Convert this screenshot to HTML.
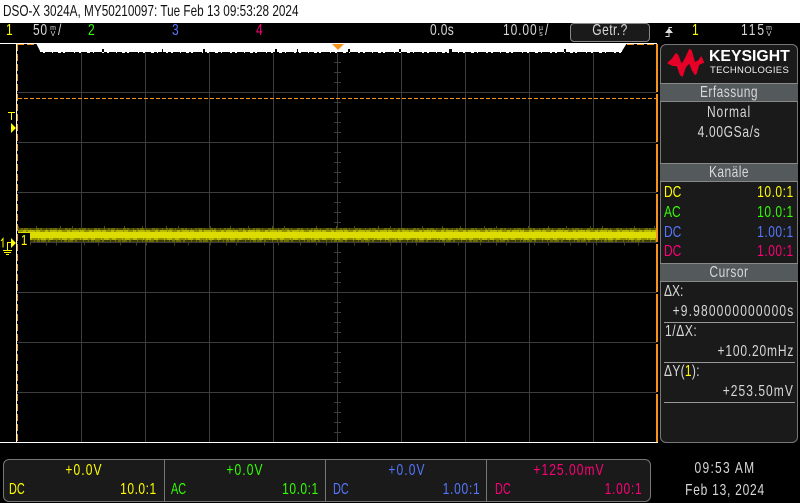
<!DOCTYPE html>
<html><head><meta charset="utf-8"><style>
html,body{margin:0;padding:0;background:#000;width:800px;height:503px;overflow:hidden}
body{position:relative;font-family:"Liberation Sans",sans-serif;font-size:16px;color:#d8d8d8}
.t,.r,.c{position:absolute;white-space:nowrap;line-height:18px;height:18px}
.t{transform-origin:0 50%;transform:scaleX(.75)}
.r{transform-origin:100% 50%;transform:scaleX(.75)}
.c{transform:translateX(-50%) scaleX(.75)}
.y{color:#ff0}.g{color:#3f0}.b{color:#57f}.p{color:#f07}
.box{position:absolute;box-sizing:border-box}
.hd{position:absolute;left:660px;width:138px;height:19px;background:#54595b;border-top:1px solid #888;border-bottom:1px solid #888;box-sizing:border-box}
.ln{position:absolute;left:664px;width:131px;height:1px;background:#999}
.s{position:absolute;font-size:7px;line-height:7px;color:#ddd;transform:translateX(-50%)}
svg{position:absolute;left:0;top:0}
</style></head><body>
<div class="box" style="left:0;top:0;width:800px;height:23px;background:#fff"></div>
<div class="t" style="left:3px;top:3px;color:#111;transform:scaleX(.735)">DSO-X 3024A, MY50210097: Tue Feb 13 09:53:28 2024</div>

<div class="t y" style="left:6px;top:22px">1</div>
<div class="t" style="left:33px;top:22px;letter-spacing:1px">50</div>
<div class="s" style="left:53px;top:25px">m</div><div class="s" style="left:53px;top:31px">V</div>
<div class="t" style="left:58px;top:22px">/</div>
<div class="t g" style="left:88px;top:22px">2</div>
<div class="t b" style="left:172px;top:22px">3</div>
<div class="t p" style="left:256px;top:22px">4</div>
<div class="t" style="left:430px;top:22px;letter-spacing:.5px">0.0s</div>
<div class="t" style="left:503px;top:22px;letter-spacing:1.2px">10.00</div>
<div class="s" style="left:541px;top:25px">µ</div><div class="s" style="left:541px;top:31px">s</div>
<div class="t" style="left:545px;top:22px">/</div>
<div class="box" style="left:570px;top:23px;width:80px;height:19px;background:#1a1a1a;border:1px solid #888;border-radius:4px"></div>
<div class="c" style="left:610px;top:22px;letter-spacing:.6px">Getr.?</div>
<div class="t y" style="left:692px;top:22px">1</div>
<div class="t" style="left:741px;top:22px;letter-spacing:2.600px">115</div>
<div class="s" style="left:769px;top:25px">m</div><div class="s" style="left:769px;top:31px">V</div>

<svg width="800" height="503" viewBox="0 0 800 503">
<!-- trigger slope icon -->
<path d="M665.500 36.500H669V27.500H672" stroke="#ddd" fill="none"/>
<path d="M665 33L669 28L673 33z" fill="#ddd"/>
<!-- grid -->
<g stroke="#3c3c3c" stroke-width="1">
<path d="M81.500 44V442M145.500 44V442M209.500 44V442M273.500 44V442M337.500 44V442M401.500 44V442M465.500 44V442M529.500 44V442M593.500 44V442"/>
<path d="M17 92.500H657M17 142.500H657M17 192.500H657M17 242.500H657M17 292.500H657M17 342.500H657M17 392.500H657"/>
</g>
<path d="M334 62.500H341M334 72.500H341M334 82.500H341M334 102.500H341M334 112.500H341M334 122.500H341M334 132.500H341M334 152.500H341M334 162.500H341M334 172.500H341M334 182.500H341M334 202.500H341M334 212.500H341M334 222.500H341M334 252.500H341M334 262.500H341M334 272.500H341M334 282.500H341M334 302.500H341M334 312.500H341M334 322.500H341M334 332.500H341M334 352.500H341M334 362.500H341M334 372.500H341M334 382.500H341M334 402.500H341M334 412.500H341M334 422.500H341M334 432.500H341" stroke="#3c3c3c"/>
<!-- memory bar -->
<path d="M0 43H657V44H0z" fill="#fff"/>
<path d="M36 43H627L622 51V53H40V51z" fill="#fff"/>
<path d="M40 52.500H622" stroke="#000" stroke-width="1" stroke-dasharray="3 2 7 1 5 3 2 2 9 1 4 2 6 3 3 1 8 2"/>
<path d="M40 50.500H622" stroke="#000" stroke-width="3" stroke-dasharray="0 62 2 3 0 55 1 40 2 70 2 20 1 50 2 45 0 4 2 48 3 50"/>
<path d="M332 44H344L338 50z" fill="#f7941d"/>
<!-- borders -->
<rect x="16" y="43" width="1" height="400" fill="#fff"/>
<rect x="0" y="442" width="658" height="1" fill="#fff"/>
<path d="M17.500 44V442" stroke="#f7941d" stroke-dasharray="7 3"/>
<path d="M657 44V442" stroke="#f7941d" stroke-width="2" stroke-dasharray="48 2"/>
<path d="M17 44.500H36M627 44.500H657" stroke="#f7941d" stroke-dasharray="7 3"/>
<path d="M18 98.500H656" stroke="#f7941d" stroke-dasharray="4 2"/>
<!-- trace -->
<rect x="18" y="228" width="638" height="14" fill="#6e6e00"/>
<rect x="18" y="230" width="638" height="10" fill="#b8b800"/>
<rect x="18" y="232" width="638" height="6" fill="#dcdc00"/>
<path d="M18 229H656" stroke="#4a4a00" stroke-width="2" stroke-dasharray="3 2 1 4 2 1 5 3 1 2 4 1"/>
<path d="M18 231H656" stroke="#8f8f00" stroke-width="2" stroke-dasharray="5 3 2 7 1 4"/>
<path d="M18 239H656" stroke="#8f8f00" stroke-width="2" stroke-dasharray="2 5 3 4 6 1"/>
<path d="M18 227H656" stroke="#4f4f00" stroke-width="2" stroke-dasharray="1 17 1 23 1 11 1 31 1 19"/>
<path d="M30 241H656" stroke="#3f3f00" stroke-width="2" stroke-dasharray="4 1 2 3 1 5 2 2 6 1"/>
<path d="M30 244H656" stroke="#444400" stroke-width="3" stroke-dasharray="1 15 1 9 1 27 1 13 1 21"/>
<rect x="18" y="233" width="12" height="11" fill="#000"/>
<!-- channel ground marker -->
<path d="M1 241L3 238.500V247.500M7.500 250V242.500H12M3 250.500H12M4 252.500H11M6 254.500H9" stroke="#ff0" fill="none"/>
<path d="M11 238L16 243L11 248z" fill="#ff0"/>
<path d="M8 112.500H15M11.500 112V120" stroke="#ff0" fill="none"/>
<path d="M11 123L16 128L11 133z" fill="#ff0"/>
</svg>
<div class="t y" style="left:21px;top:232px;font-size:15px">1</div>

<!-- right panel -->
<div class="box" style="left:660px;top:44px;width:138px;height:399px;background:#1a1a1a;border:1px solid #777;border-radius:6px"></div>
<svg width="800" height="503" viewBox="0 0 800 503">
<path d="M667.300 62.700L671.700 58.700L675.700 53L678.300 54.700L681.700 63.700L685 58L689.300 48.700L691.700 50.300L695 62L698.300 60.300L701.300 56L703.300 60.300L704.300 62.700L699.300 64.700L696.700 73.700L695 75.300L691.700 70.300L689.300 63.700L686 67L682.700 77L680 75.300L676.700 66L672.700 66L668.300 64z" fill="#e60028"/>
</svg>
<div class="box" style="left:709px;top:47px;font-weight:bold;font-size:15.800px;line-height:20px;color:#fff;white-space:nowrap">KEYSIGHT</div>
<div class="box" style="left:710px;top:65px;font-size:9.500px;line-height:12px;letter-spacing:.3px;color:#eee;white-space:nowrap">TECHNOLOGIES</div>

<div class="hd" style="top:83px"></div>
<div class="hd" style="top:163px"></div>
<div class="hd" style="top:263px"></div>
<div class="c" style="left:729px;top:84px;letter-spacing:.6px">Erfassung</div>
<div class="c" style="left:729px;top:104px;letter-spacing:1.2px">Normal</div>
<div class="c" style="left:729px;top:124px;letter-spacing:.9px">4.00GSa/s</div>
<div class="c" style="left:729px;top:164px;letter-spacing:.6px">Kanäle</div>
<div class="c" style="left:729px;top:264px;letter-spacing:.7px">Cursor</div>

<div class="t y" style="left:664px;top:184px">DC</div><div class="r y" style="right:6px;top:184px;letter-spacing:.7px">10.0:1</div>
<div class="t g" style="left:664px;top:204px">AC</div><div class="r g" style="right:6px;top:204px;letter-spacing:.7px">10.0:1</div>
<div class="t b" style="left:664px;top:224px">DC</div><div class="r b" style="right:6px;top:224px;letter-spacing:.7px">1.00:1</div>
<div class="t p" style="left:664px;top:243px">DC</div><div class="r p" style="right:6px;top:243px;letter-spacing:.7px">1.00:1</div>

<div class="t" style="left:664px;top:283px">ΔX:</div>
<div class="r" style="right:6px;top:303px;letter-spacing:1.560px">+9.980000000000s</div>
<div class="ln" style="top:322px"></div>
<div class="t" style="left:665px;top:323px;letter-spacing:.8px">1/ΔX:</div>
<div class="r" style="right:6px;top:343px;letter-spacing:1.100px">+100.20mHz</div>
<div class="ln" style="top:362px"></div>
<div class="t" style="left:664px;top:363px;letter-spacing:.4px">ΔY(<span class="y">1</span>):</div>
<div class="r" style="right:6px;top:383px;letter-spacing:1.400px">+253.50mV</div>
<div class="ln" style="top:402px"></div>

<!-- bottom -->
<div class="box" style="left:3px;top:459px;width:648px;height:43px;background:#1a1a1a;border:1px solid #777;border-radius:6px"></div>
<div class="box" style="left:164px;top:459px;width:1px;height:43px;background:#777"></div>
<div class="box" style="left:325px;top:459px;width:1px;height:43px;background:#777"></div>
<div class="box" style="left:486px;top:459px;width:1px;height:43px;background:#777"></div>

<div class="c y" style="left:84px;top:462px;letter-spacing:1.500px">+0.0V</div>
<div class="t y" style="left:9px;top:481px;transform:scaleX(.68)">DC</div><div class="r y" style="right:643px;top:481px;letter-spacing:.7px">10.0:1</div>
<div class="c g" style="left:245px;top:462px;letter-spacing:1.500px">+0.0V</div>
<div class="t g" style="left:171px;top:481px;transform:scaleX(.68)">AC</div><div class="r g" style="right:481px;top:481px;letter-spacing:.7px">10.0:1</div>
<div class="c b" style="left:407px;top:462px;letter-spacing:1.500px">+0.0V</div>
<div class="t b" style="left:333px;top:481px;transform:scaleX(.68)">DC</div><div class="r b" style="right:320px;top:481px;letter-spacing:1px">1.00:1</div>
<div class="c p" style="left:569px;top:462px;letter-spacing:1.400px">+125.00mV</div>
<div class="t p" style="left:495px;top:481px;transform:scaleX(.68)">DC</div><div class="r p" style="right:158px;top:481px;letter-spacing:1px">1.00:1</div>

<div class="c" style="left:725px;top:460px;letter-spacing:1.700px">09:53 AM</div>
<div class="c" style="left:725px;top:482px;letter-spacing:1px">Feb 13, 2024</div>
</body></html>
